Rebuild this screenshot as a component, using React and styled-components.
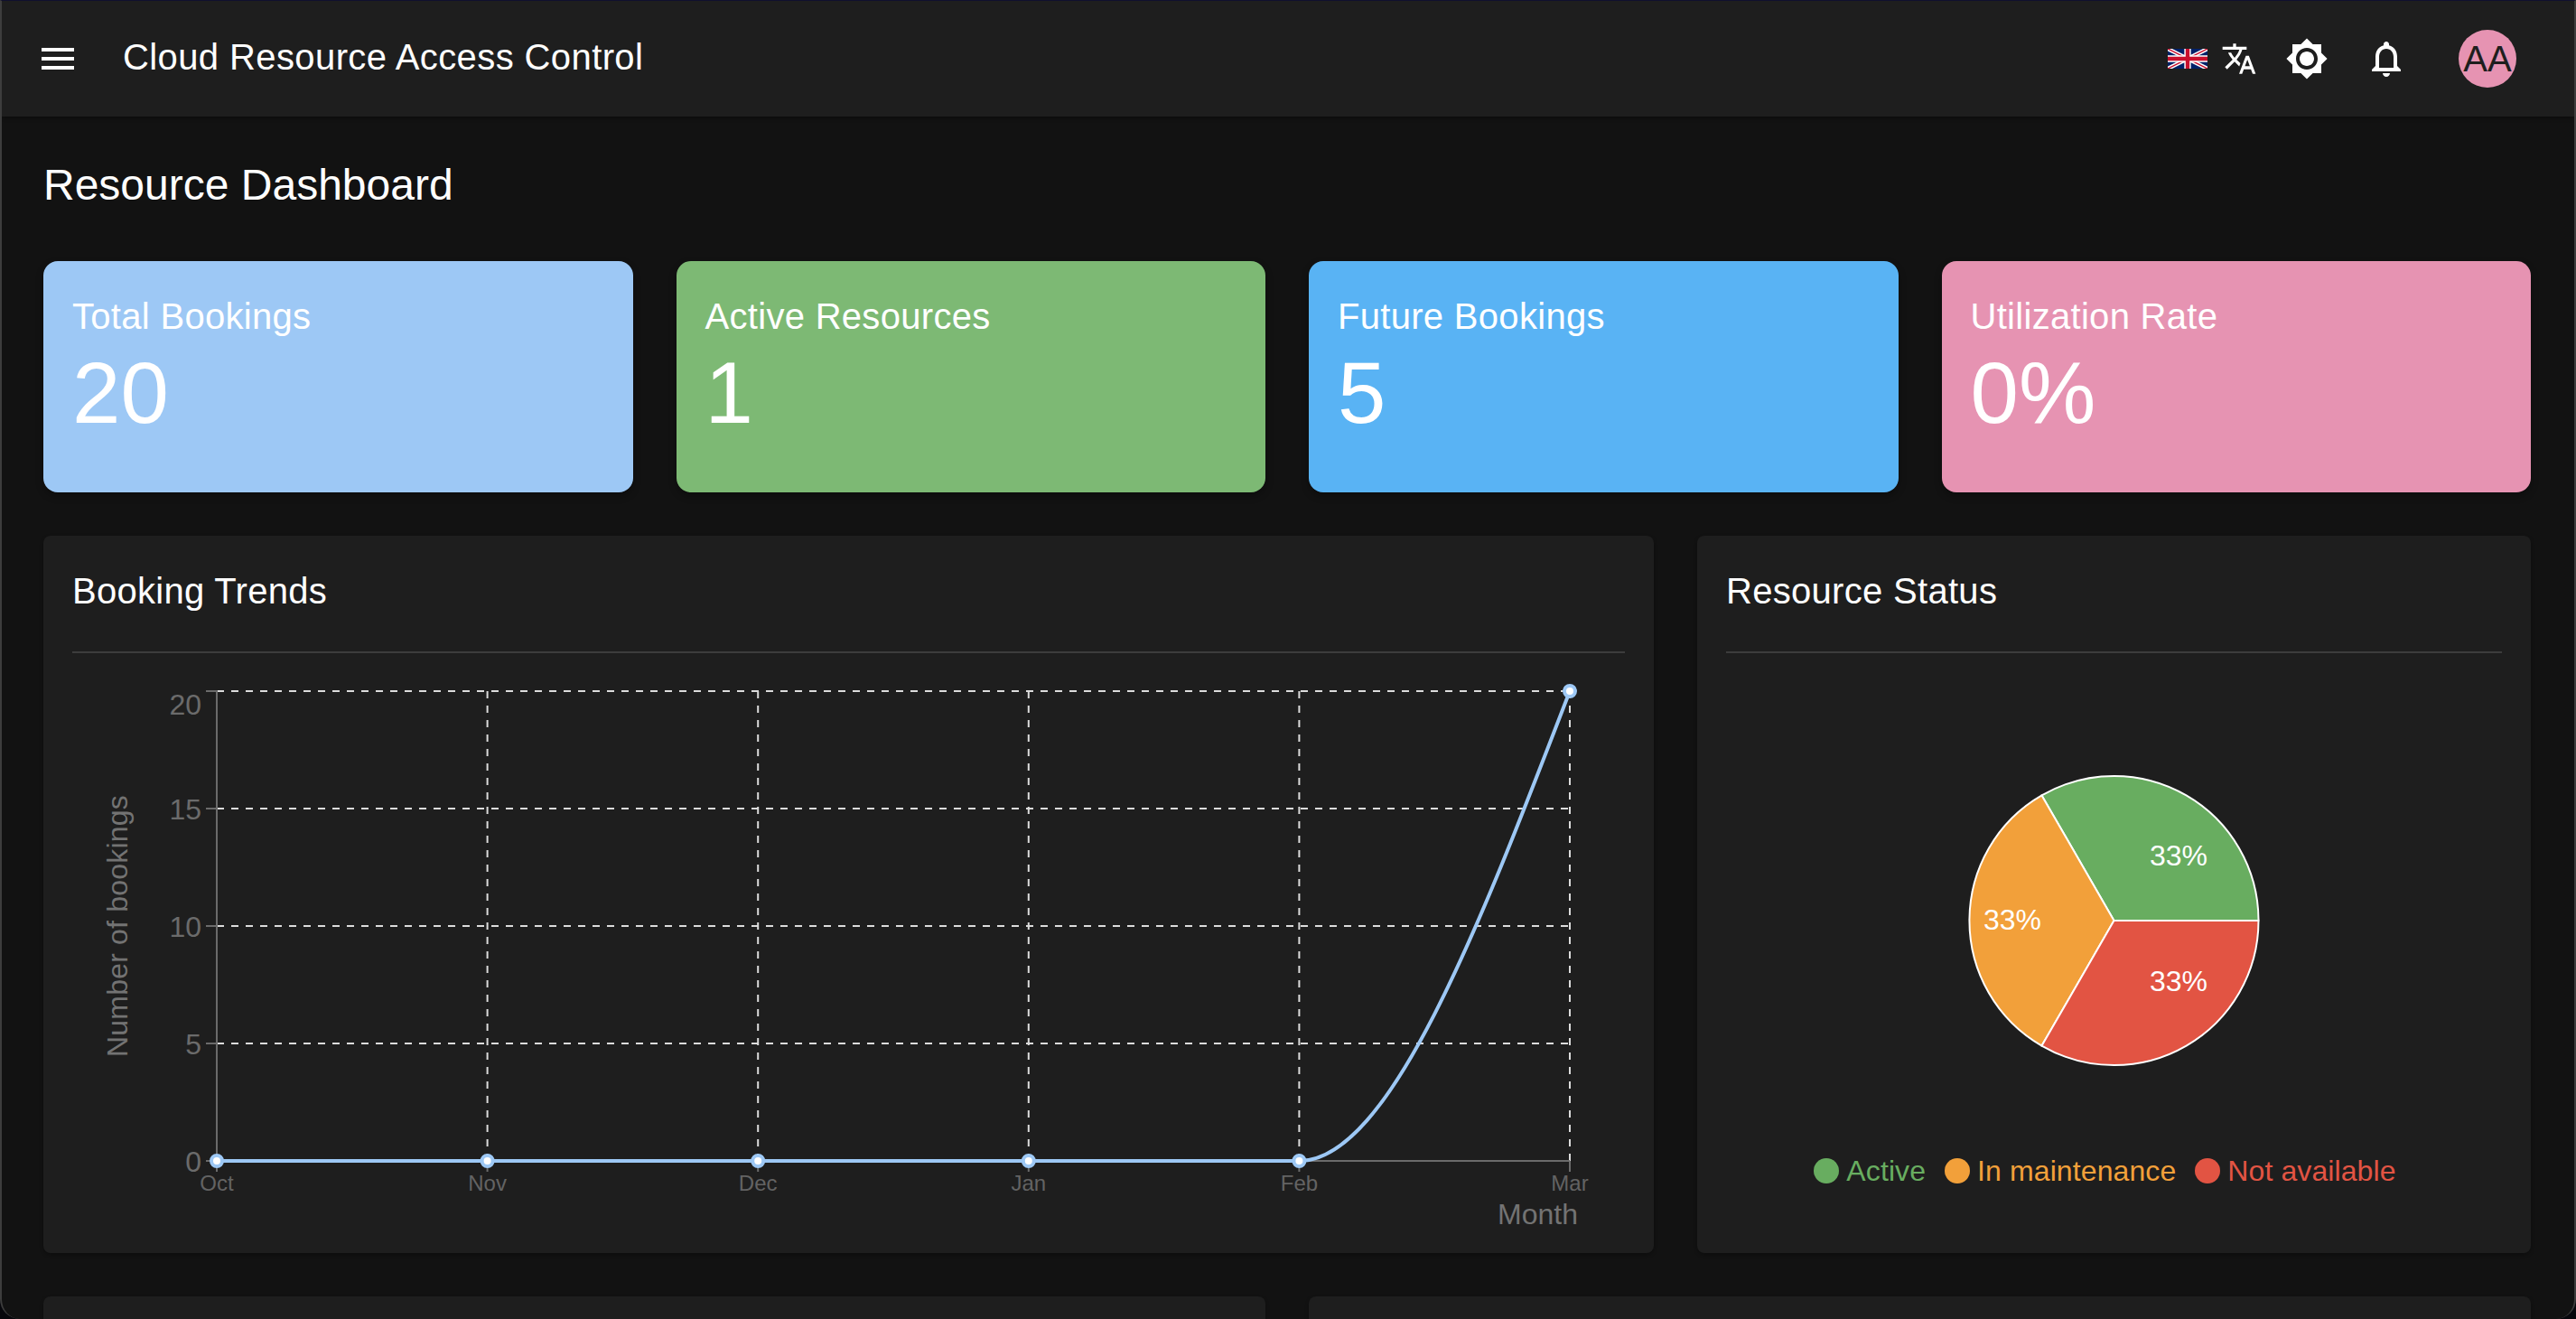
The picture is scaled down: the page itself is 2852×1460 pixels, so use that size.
import React from 'react'
import styled, { createGlobalStyle } from 'styled-components'

const GlobalStyle = createGlobalStyle`
    body {
        margin: 0;
        background: #07070c;
        font-family: "Liberation Sans", Arial, sans-serif;
    }
`

const Frame = styled.div`
    box-sizing: border-box;
    height: 1460px;
    overflow: hidden;
    background: #121212;
    color: #fff;
    border-top: 1px solid #10102e;
    border-left: 2px solid #3d3d3d;
    border-right: 2px solid #3d3d3d;
    border-radius: 0 0 22px 22px;
`
const AppBar = styled.header`
    display: flex;
    align-items: center;
    height: 128px;
    padding: 0 64px 0 38px;
    background: #1e1e1e;
    box-shadow: 0 2px 4px rgba(0, 0, 0, 0.3);
`
const AppTitle = styled.div`
    margin: 0 0 4px 48px;
    font-size: 40px;
    line-height: 60px;
    letter-spacing: 0.4px;
`
const Actions = styled.div`
    display: flex;
    align-items: center;
    margin-left: auto;
`
const Icon = styled.svg`
    display: block;
    flex: none;
    width: ${props => props.$size}px;
    height: ${props => props.$size}px;
    margin-left: ${props => props.$gap || 0}px;
    fill: #fff;
`
const Flag = styled.svg`
    display: block;
    width: 44px;
    height: 22px;
`
const Avatar = styled.div`
    display: flex;
    align-items: center;
    justify-content: center;
    width: 64px;
    height: 64px;
    margin-left: 56px;
    border-radius: 50%;
    background: #e693b2;
    color: #1e1e1e;
    font-size: 40px;
`
const Main = styled.main`
    padding: 40px 48px 0 46px;
`
const Heading = styled.h1`
    margin: 0 0 48px;
    font-size: 48px;
    font-weight: 400;
    line-height: 72px;
`
const StatGrid = styled.section`
    display: grid;
    grid-template-columns: repeat(4, 1fr);
    gap: 48px;
    margin-bottom: 48px;
`
const StatCard = styled.div`
    box-sizing: border-box;
    height: 256px;
    padding: 32px;
    border-radius: 16px;
    background: ${props => props.$color};
    box-shadow: 0 4px 8px rgba(0, 0, 0, 0.3);
`
const StatLabel = styled.div`
    font-size: 40px;
    line-height: 58px;
    letter-spacing: 0.3px;
`
const StatValue = styled.div`
    font-size: 96px;
    line-height: 112px;
`
const ChartRow = styled.section`
    display: grid;
    grid-template-columns: 1783fr 923fr;
    gap: 48px;
    margin-bottom: 48px;
`
const BottomRow = styled.section`
    display: grid;
    grid-template-columns: 1fr 1fr;
    gap: 48px;
`
const Card = styled.div`
    border-radius: 8px;
    background: #1e1e1e;
    box-shadow: 0 2px 4px rgba(0, 0, 0, 0.3);
    height: ${props => props.$height}px;
`
const CardTitle = styled.div`
    margin: 0 32px;
    padding: 32px 0 38px;
    border-bottom: 2px solid #3c3c3c;
    font-size: 40px;
    line-height: 58px;
    letter-spacing: 0.3px;
`
const ChartSvg = styled.svg`
    display: block;
    width: 100%;
`
const PieBox = styled.svg`
    display: block;
    width: 100%;
    height: 464px;
`
const AxisText = styled.text`
    fill: ${props => props.$color || '#6b6b6b'};
    font-size: ${props => props.$size || 32}px;
    letter-spacing: ${props => props.$spacing || 0}px;
`
const PieLabel = styled.text`
    fill: #fff;
    font-size: 32px;
    text-anchor: middle;
`
const Legend = styled.div`
    display: flex;
    justify-content: center;
    gap: 21px;
    padding-right: 20px;
    margin-top: 89px;
`
const LegendItem = styled.div`
    display: flex;
    align-items: center;
    gap: 8px;
    color: ${props => props.$color};
    font-size: 32px;
    line-height: 40px;
    letter-spacing: 0.1px;
`
const LegendDot = styled.span`
    width: 28px;
    height: 28px;
    border-radius: 50%;
    background: ${props => props.$color};
`

const stats = [
    { label: 'Total Bookings', value: '20', color: '#9dc8f5' },
    { label: 'Active Resources', value: '1', color: '#7db974' },
    { label: 'Future Bookings', value: '5', color: '#59b3f4' },
    { label: 'Utilization Rate', value: '0%', color: '#e693b2' },
]

const legend = [
    { label: 'Active', color: '#68ad60' },
    { label: 'In maintenance', color: '#f2a03a' },
    { label: 'Not available', color: '#e25443' },
]

const months = ['Oct', 'Nov', 'Dec', 'Jan', 'Feb', 'Mar']
const monthX = months.map((_, i) => 240 + i * 299.6)
const ticks = [
    { label: '20', y: 765, base: 791 },
    { label: '15', y: 895, base: 907 },
    { label: '10', y: 1025, base: 1037 },
    { label: '5', y: 1155, base: 1167 },
    { label: '0', y: 1285, base: 1297 },
]

const LineChart = () => (
    <ChartSvg viewBox="48 723 1783 664" height="664">
        {ticks.slice(0, 4).map(t => (
            <line key={t.y} x1="240" x2="1738" y1={t.y} y2={t.y} stroke="#dcdcdc" strokeWidth="2" strokeDasharray="8 8" />
        ))}
        {monthX.slice(1).map(x => (
            <line key={x} x1={x} x2={x} y1="765" y2="1285" stroke="#dcdcdc" strokeWidth="2" strokeDasharray="8 8" />
        ))}
        <line x1="240" x2="240" y1="764" y2="1285" stroke="#6b6b6b" strokeWidth="2" />
        <line x1="240" x2="1738" y1="1285" y2="1285" stroke="#6b6b6b" strokeWidth="2" />
        {ticks.map(t => (
            <g key={t.label}>
                <line x1="228" x2="240" y1={t.y} y2={t.y} stroke="#6b6b6b" strokeWidth="2" />
                <AxisText x="223" y={t.base} textAnchor="end">{t.label}</AxisText>
            </g>
        ))}
        {monthX.map((x, i) => (
            <g key={x}>
                <line x1={x} x2={x} y1="1285" y2="1297" stroke="#6b6b6b" strokeWidth="2" />
                <AxisText x={x} y="1318" textAnchor="middle" $size={24} $color="#636363">{months[i]}</AxisText>
            </g>
        ))}
        <AxisText x="1747" y="1355" textAnchor="end" $color="#737373">Month</AxisText>
        <AxisText transform="translate(141 1025) rotate(-90)" textAnchor="middle" $color="#737373" $spacing={0.2}>Number of bookings</AxisText>
        <path d="M240 1285 L1438.4 1285 C1538.3 1285 1638.1 1025 1738 765" fill="none" stroke="#9dc8f5" strokeWidth="4" />
        {monthX.map((x, i) => (
            <circle key={x} cx={x} cy={i === 5 ? 765 : 1285} r="6" fill="#fff" stroke="#9dc8f5" strokeWidth="4" />
        ))}
    </ChartSvg>
)

const PieChart = () => (
    <>
        <PieBox viewBox="1879 723 923 464">
            <g stroke="#fff" strokeWidth="2" strokeLinejoin="round">
                <path d="M2340.5 1019 L2500.5 1019 A160 160 0 0 0 2260.5 880.4 Z" fill="#68ad60" />
                <path d="M2340.5 1019 L2260.5 880.4 A160 160 0 0 0 2260.5 1157.6 Z" fill="#f2a03a" />
                <path d="M2340.5 1019 L2260.5 1157.6 A160 160 0 0 0 2500.5 1019 Z" fill="#e25443" />
            </g>
            <PieLabel x="2412" y="958">33%</PieLabel>
            <PieLabel x="2228" y="1029">33%</PieLabel>
            <PieLabel x="2412" y="1097">33%</PieLabel>
        </PieBox>
        <Legend>
            {legend.map(item => (
                <LegendItem key={item.label} $color={item.color}>
                    <LegendDot $color={item.color} />
                    {item.label}
                </LegendItem>
            ))}
        </Legend>
    </>
)

const UkFlag = () => (
    <Flag viewBox="0 0 60 30" preserveAspectRatio="none">
        <rect width="60" height="30" fill="#012169" />
        <path d="M0 0L60 30M60 0L0 30" stroke="#fff" strokeWidth="6" />
        <path d="M0 0L60 30M60 0L0 30" stroke="#c8102e" strokeWidth="2" />
        <path d="M30 0V30M0 15H60" stroke="#fff" strokeWidth="10" />
        <path d="M30 0V30M0 15H60" stroke="#c8102e" strokeWidth="6" />
    </Flag>
)

const App = () => {
    return (
        <Frame>
            <GlobalStyle />
            <AppBar>
                <Icon $size={48} viewBox="0 0 24 24">
                    <path d="M3 18h18v-2H3v2zm0-5h18v-2H3v2zm0-7v2h18V6H3z" />
                </Icon>
                <AppTitle>Cloud Resource Access Control</AppTitle>
                <Actions>
                    <UkFlag />
                    <Icon $size={40} $gap={15} viewBox="0 0 24 24">
                        <path d="m12.87 15.07-2.54-2.51.03-.03c1.74-1.94 2.98-4.17 3.71-6.53H17V4h-7V2H8v2H1v1.99h11.17C11.5 7.92 10.44 9.75 9 11.35 8.07 10.32 7.3 9.19 6.69 8h-2c.73 1.63 1.73 3.17 2.98 4.56l-5.09 5.02L4 19l5-5 3.11 3.11.76-2.04zM18.5 10h-2L12 22h2l1.12-3h4.75L21 22h2l-4.5-12zm-2.62 7 1.62-4.33L19.12 17h-3.24z" />
                    </Icon>
                    <Icon $size={48} $gap={31} viewBox="0 0 24 24">
                        <path d="M20 8.69V4h-4.69L12 .69 8.69 4H4v4.69L.69 12 4 15.31V20h4.69L12 23.31 15.31 20H20v-4.69L23.31 12 20 8.69zM12 18c-3.31 0-6-2.69-6-6s2.69-6 6-6 6 2.69 6 6-2.69 6-6 6zm0-10c-2.21 0-4 1.79-4 4s1.79 4 4 4 4-1.79 4-4-1.79-4-4-4z" />
                    </Icon>
                    <Icon $size={48} $gap={40} viewBox="0 0 24 24">
                        <path d="M12 22c1.1 0 2-.9 2-2h-4c0 1.1.9 2 2 2zm6-6v-5c0-3.07-1.63-5.64-4.5-6.32V4c0-.83-.67-1.5-1.5-1.5s-1.5.67-1.5 1.5v.68C7.64 5.36 6 7.92 6 11v5l-2 2v1h16v-1l-2-2zm-2 1H8v-6c0-2.48 1.51-4.5 4-4.5s4 2.02 4 4.5v6z" />
                    </Icon>
                    <Avatar>AA</Avatar>
                </Actions>
            </AppBar>
            <Main>
                <Heading>Resource Dashboard</Heading>
                <StatGrid>
                    {stats.map(s => (
                        <StatCard key={s.label} $color={s.color}>
                            <StatLabel>{s.label}</StatLabel>
                            <StatValue>{s.value}</StatValue>
                        </StatCard>
                    ))}
                </StatGrid>
                <ChartRow>
                    <Card $height={794}>
                        <CardTitle>Booking Trends</CardTitle>
                        <LineChart />
                    </Card>
                    <Card $height={794}>
                        <CardTitle>Resource Status</CardTitle>
                        <PieChart />
                    </Card>
                </ChartRow>
                <BottomRow>
                    <Card $height={400} />
                    <Card $height={400} />
                </BottomRow>
            </Main>
        </Frame>
    )
}

export default App
